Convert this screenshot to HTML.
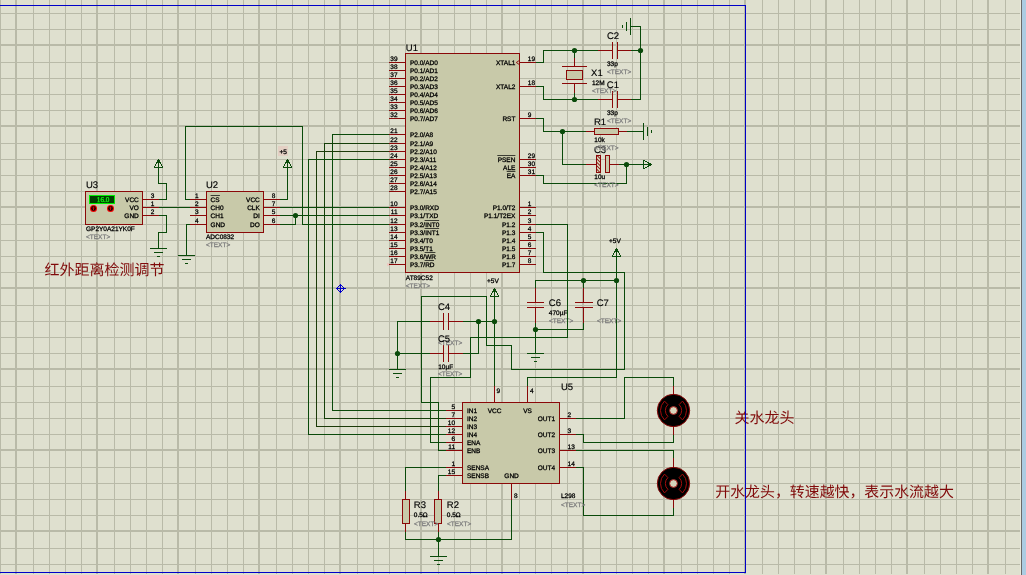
<!DOCTYPE html>
<html lang="zh"><head><meta charset="utf-8"><title>Schematic</title>
<style>
html,body{margin:0;padding:0;background:#dfe0cf;overflow:hidden}
svg{display:block;position:absolute;left:0;top:0;will-change:transform}
text{white-space:pre}
</style></head><body>
<svg width="1026" height="575" viewBox="0 0 1026 575" shape-rendering="crispEdges" text-rendering="geometricPrecision">
<rect x="0" y="0" width="1026" height="575" fill="#dfe0cf"/>
<path fill="#b9baa8" d="M0 0h1v574h-1zM15 0h2v574h-2zM33 0h1v574h-1zM49 0h1v574h-1zM65 0h1v574h-1zM81 0h1v574h-1zM96 0h2v574h-2zM114 0h1v574h-1zM130 0h1v574h-1zM146 0h1v574h-1zM162 0h1v574h-1zM177 0h2v574h-2zM195 0h1v574h-1zM211 0h1v574h-1zM227 0h1v574h-1zM243 0h1v574h-1zM258 0h2v574h-2zM276 0h1v574h-1zM292 0h1v574h-1zM308 0h1v574h-1zM324 0h1v574h-1zM339 0h2v574h-2zM357 0h1v574h-1zM373 0h1v574h-1zM389 0h1v574h-1zM405 0h1v574h-1zM420 0h2v574h-2zM438 0h1v574h-1zM454 0h1v574h-1zM470 0h1v574h-1zM486 0h1v574h-1zM501 0h2v574h-2zM519 0h1v574h-1zM535 0h1v574h-1zM551 0h1v574h-1zM567 0h1v574h-1zM582 0h2v574h-2zM600 0h1v574h-1zM616 0h1v574h-1zM632 0h1v574h-1zM648 0h1v574h-1zM663 0h2v574h-2zM681 0h1v574h-1zM697 0h1v574h-1zM713 0h1v574h-1zM729 0h1v574h-1zM744 0h2v574h-2zM762 0h1v574h-1zM778 0h1v574h-1zM794 0h1v574h-1zM810 0h1v574h-1zM825 0h2v574h-2zM843 0h1v574h-1zM859 0h1v574h-1zM875 0h1v574h-1zM891 0h1v574h-1zM906 0h2v574h-2zM924 0h1v574h-1zM940 0h1v574h-1zM956 0h1v574h-1zM972 0h1v574h-1zM987 0h2v574h-2zM1005 0h1v574h-1zM0 13h1020v1h-1020zM0 29h1020v1h-1020zM0 44h1020v2h-1020zM0 62h1020v1h-1020zM0 78h1020v1h-1020zM0 94h1020v1h-1020zM0 110h1020v1h-1020zM0 125h1020v2h-1020zM0 143h1020v1h-1020zM0 159h1020v1h-1020zM0 175h1020v1h-1020zM0 191h1020v1h-1020zM0 206h1020v2h-1020zM0 224h1020v1h-1020zM0 240h1020v1h-1020zM0 256h1020v1h-1020zM0 272h1020v1h-1020zM0 287h1020v2h-1020zM0 305h1020v1h-1020zM0 321h1020v1h-1020zM0 337h1020v1h-1020zM0 353h1020v1h-1020zM0 368h1020v2h-1020zM0 386h1020v1h-1020zM0 402h1020v1h-1020zM0 418h1020v1h-1020zM0 434h1020v1h-1020zM0 449h1020v2h-1020zM0 467h1020v1h-1020zM0 483h1020v1h-1020zM0 499h1020v1h-1020zM0 515h1020v1h-1020zM0 530h1020v2h-1020zM0 548h1020v1h-1020zM0 564h1020v1h-1020z"/>
<rect x="1020" y="0" width="1" height="575" fill="#e9e9dc"/>
<rect x="1021" y="0" width="1" height="575" fill="#6a6a6a"/>
<rect x="1022" y="0" width="4" height="575" fill="#abcce2"/>
<rect x="85.5" y="191.5" width="57" height="33" fill="#c8c9a9" stroke="#8a0808" stroke-width="1"/>
<rect x="89.5" y="195.5" width="25" height="8" fill="#004000" stroke="#00f000" stroke-width="1"/>
<text x="109.4" y="202.4" font-size="7.2" fill="#10e810" stroke="#10e810" stroke-width="0.4" text-anchor="end">16.0</text>
<g shape-rendering="geometricPrecision"><circle cx="93.5" cy="208.5" r="3.5" fill="#f00000"/><circle cx="93.5" cy="208.5" r="2.4" fill="#100000"/><rect x="93.1" y="206.6" width="0.9" height="3.6" fill="#f00000"/><rect x="92.2" y="207.6" width="2.6" height="0.8" fill="#c00000"/></g>
<g shape-rendering="geometricPrecision"><circle cx="110.5" cy="208.5" r="3.5" fill="#f00000"/><circle cx="110.5" cy="208.5" r="2.4" fill="#100000"/><rect x="110.1" y="206.6" width="0.9" height="3.6" fill="#f00000"/><rect x="109.2" y="207.6" width="2.6" height="0.8" fill="#c00000"/></g>
<rect x="206.5" y="191.5" width="57" height="41" fill="#c8c9a9" stroke="#8a0808" stroke-width="1"/>
<rect x="405.5" y="53.5" width="114" height="219" fill="#c8c9a9" stroke="#8a0808" stroke-width="1"/>
<rect x="462.5" y="402.5" width="97" height="81" fill="#c8c9a9" stroke="#8a0808" stroke-width="1"/>
<rect x="143" y="199" width="16" height="1" fill="#8a0808"/>
<rect x="143" y="207" width="16" height="1" fill="#8a0808"/>
<rect x="143" y="215" width="16" height="1" fill="#8a0808"/>
<rect x="190" y="199" width="16" height="1" fill="#8a0808"/>
<rect x="264" y="199" width="16" height="1" fill="#8a0808"/>
<rect x="190" y="207" width="16" height="1" fill="#8a0808"/>
<rect x="264" y="207" width="16" height="1" fill="#8a0808"/>
<rect x="190" y="215" width="16" height="1" fill="#8a0808"/>
<rect x="264" y="215" width="16" height="1" fill="#8a0808"/>
<rect x="190" y="224" width="16" height="1" fill="#8a0808"/>
<rect x="264" y="224" width="16" height="1" fill="#8a0808"/>
<rect x="389" y="62" width="16" height="1" fill="#8a0808"/>
<rect x="389" y="70" width="16" height="1" fill="#8a0808"/>
<rect x="389" y="78" width="16" height="1" fill="#8a0808"/>
<rect x="389" y="86" width="16" height="1" fill="#8a0808"/>
<rect x="389" y="94" width="16" height="1" fill="#8a0808"/>
<rect x="389" y="102" width="16" height="1" fill="#8a0808"/>
<rect x="389" y="110" width="16" height="1" fill="#8a0808"/>
<rect x="389" y="118" width="16" height="1" fill="#8a0808"/>
<rect x="389" y="134" width="16" height="1" fill="#8a0808"/>
<rect x="389" y="143" width="16" height="1" fill="#8a0808"/>
<rect x="389" y="151" width="16" height="1" fill="#8a0808"/>
<rect x="389" y="159" width="16" height="1" fill="#8a0808"/>
<rect x="389" y="167" width="16" height="1" fill="#8a0808"/>
<rect x="389" y="175" width="16" height="1" fill="#8a0808"/>
<rect x="389" y="183" width="16" height="1" fill="#8a0808"/>
<rect x="389" y="191" width="16" height="1" fill="#8a0808"/>
<rect x="389" y="207" width="16" height="1" fill="#8a0808"/>
<rect x="389" y="215" width="16" height="1" fill="#8a0808"/>
<rect x="389" y="224" width="16" height="1" fill="#8a0808"/>
<rect x="389" y="232" width="16" height="1" fill="#8a0808"/>
<rect x="389" y="240" width="16" height="1" fill="#8a0808"/>
<rect x="389" y="248" width="16" height="1" fill="#8a0808"/>
<rect x="389" y="256" width="16" height="1" fill="#8a0808"/>
<rect x="389" y="264" width="16" height="1" fill="#8a0808"/>
<rect x="520" y="62" width="16" height="1" fill="#8a0808"/>
<rect x="520" y="86" width="16" height="1" fill="#8a0808"/>
<rect x="520" y="118" width="16" height="1" fill="#8a0808"/>
<rect x="520" y="159" width="16" height="1" fill="#8a0808"/>
<rect x="520" y="167" width="16" height="1" fill="#8a0808"/>
<rect x="520" y="175" width="16" height="1" fill="#8a0808"/>
<rect x="520" y="207" width="16" height="1" fill="#8a0808"/>
<rect x="520" y="215" width="16" height="1" fill="#8a0808"/>
<rect x="520" y="224" width="16" height="1" fill="#8a0808"/>
<rect x="520" y="232" width="16" height="1" fill="#8a0808"/>
<rect x="520" y="240" width="16" height="1" fill="#8a0808"/>
<rect x="520" y="248" width="16" height="1" fill="#8a0808"/>
<rect x="520" y="256" width="16" height="1" fill="#8a0808"/>
<rect x="520" y="264" width="16" height="1" fill="#8a0808"/>
<rect x="387" y="263" width="2" height="3" fill="#ecc8c0"/>
<path d="M519.5 60.3 L516.3 62.5 L519.5 64.7" fill="none" stroke="#8a0808" stroke-width="0.9" shape-rendering="geometricPrecision"/>
<rect x="446" y="410" width="16" height="1" fill="#8a0808"/>
<rect x="446" y="418" width="16" height="1" fill="#8a0808"/>
<rect x="446" y="426" width="16" height="1" fill="#8a0808"/>
<rect x="446" y="434" width="16" height="1" fill="#8a0808"/>
<rect x="446" y="442" width="16" height="1" fill="#8a0808"/>
<rect x="446" y="450" width="16" height="1" fill="#8a0808"/>
<rect x="446" y="467" width="16" height="1" fill="#8a0808"/>
<rect x="446" y="475" width="16" height="1" fill="#8a0808"/>
<rect x="560" y="418" width="16" height="1" fill="#8a0808"/>
<rect x="560" y="434" width="16" height="1" fill="#8a0808"/>
<rect x="560" y="450" width="16" height="1" fill="#8a0808"/>
<rect x="560" y="467" width="16" height="1" fill="#8a0808"/>
<rect x="494" y="386" width="1" height="16" fill="#8a0808"/>
<rect x="527" y="386" width="1" height="16" fill="#8a0808"/>
<rect x="511" y="484" width="1" height="16" fill="#8a0808"/>
<rect x="598" y="50" width="15" height="1" fill="#8a0808"/>
<rect x="617" y="50" width="15" height="1" fill="#8a0808"/>
<rect x="612" y="42" width="1" height="17" fill="#8a0808"/>
<rect x="617" y="42" width="1" height="17" fill="#8a0808"/>
<rect x="598" y="99" width="15" height="1" fill="#8a0808"/>
<rect x="617" y="99" width="15" height="1" fill="#8a0808"/>
<rect x="612" y="91" width="1" height="17" fill="#8a0808"/>
<rect x="617" y="91" width="1" height="17" fill="#8a0808"/>
<rect x="429" y="321" width="15" height="1" fill="#8a0808"/>
<rect x="448" y="321" width="15" height="1" fill="#8a0808"/>
<rect x="443" y="313" width="1" height="17" fill="#8a0808"/>
<rect x="448" y="313" width="1" height="17" fill="#8a0808"/>
<rect x="429" y="353" width="15" height="1" fill="#8a0808"/>
<rect x="448" y="353" width="15" height="1" fill="#8a0808"/>
<rect x="443" y="345" width="1" height="17" fill="#8a0808"/>
<rect x="448" y="345" width="1" height="17" fill="#8a0808"/>
<rect x="535" y="288" width="1" height="15" fill="#8a0808"/>
<rect x="535" y="307" width="1" height="16" fill="#8a0808"/>
<rect x="527" y="302" width="17" height="1" fill="#8a0808"/>
<rect x="527" y="307" width="17" height="1" fill="#8a0808"/>
<rect x="583" y="288" width="1" height="15" fill="#8a0808"/>
<rect x="583" y="307" width="1" height="16" fill="#8a0808"/>
<rect x="575" y="302" width="18" height="1" fill="#8a0808"/>
<rect x="575" y="307" width="18" height="1" fill="#8a0808"/>
<rect x="574" y="58" width="1" height="9" fill="#8a0808"/>
<rect x="562" y="66" width="25" height="1" fill="#8a0808"/>
<rect x="566.5" y="70.5" width="16" height="9" fill="#c8c9a9" stroke="#8a0808" stroke-width="1"/>
<rect x="562" y="83" width="25" height="1" fill="#8a0808"/>
<rect x="574" y="83" width="1" height="10" fill="#8a0808"/>
<rect x="586" y="131" width="9" height="1" fill="#8a0808"/>
<rect x="619" y="131" width="8" height="1" fill="#8a0808"/>
<rect x="594.5" y="128.5" width="24" height="6" fill="#c8c9a9" stroke="#8a0808" stroke-width="1"/>
<rect x="586" y="164" width="11" height="1" fill="#8a0808"/>
<rect x="610" y="164" width="9" height="1" fill="#8a0808"/>
<rect x="596.5" y="155.5" width="4" height="17" fill="#d8dcc0" stroke="#8a0808" stroke-width="1"/>
<path d="M596.5 155 L600.5 159 M596.5 158.5 L600.5 162.5 M596.5 162 L600.5 166 M596.5 165.5 L600.5 169.5 M596.5 169 L600.5 173" stroke="#8a0808" stroke-width="1.05" fill="none" shape-rendering="geometricPrecision"/>
<rect x="605.5" y="155.5" width="4" height="17" fill="#c8c9a9" stroke="#8a0808" stroke-width="1"/>
<rect x="405" y="491" width="1" height="9" fill="#8a0808"/>
<rect x="405" y="523" width="1" height="9" fill="#8a0808"/>
<rect x="402.5" y="499.5" width="7" height="24" fill="#c8c9a9" stroke="#8a0808" stroke-width="1"/>
<rect x="438" y="491" width="1" height="9" fill="#8a0808"/>
<rect x="438" y="523" width="1" height="9" fill="#8a0808"/>
<rect x="434.5" y="499.5" width="7" height="24" fill="#c8c9a9" stroke="#8a0808" stroke-width="1"/>
<rect x="673" y="385" width="1" height="10" fill="#8a0808"/>
<rect x="673" y="426" width="1" height="9" fill="#8a0808"/>
<g shape-rendering="geometricPrecision" transform="translate(673.5 410.5)"><circle r="16.2" fill="#000" stroke="#8a0808" stroke-width="1"/><path d="M-9 -9.4 A13 13 0 0 0 -9 9.4 L-5.6 5.9 A8.1 8.1 0 0 1 -5.6 -5.9 Z M9 -9.4 A13 13 0 0 1 9 9.4 L5.6 5.9 A8.1 8.1 0 0 0 5.6 -5.9 Z" fill="none" stroke="#a40c0c" stroke-width="1"/><circle r="3.9" fill="#d4d6bc" stroke="#a81010" stroke-width="0.9"/></g>
<rect x="673" y="458" width="1" height="10" fill="#8a0808"/>
<rect x="673" y="499" width="1" height="9" fill="#8a0808"/>
<g shape-rendering="geometricPrecision" transform="translate(673.5 483.5)"><circle r="16.2" fill="#000" stroke="#8a0808" stroke-width="1"/><path d="M-9 -9.4 A13 13 0 0 0 -9 9.4 L-5.6 5.9 A8.1 8.1 0 0 1 -5.6 -5.9 Z M9 -9.4 A13 13 0 0 1 9 9.4 L5.6 5.9 A8.1 8.1 0 0 0 5.6 -5.9 Z" fill="none" stroke="#a40c0c" stroke-width="1"/><circle r="3.9" fill="#d4d6bc" stroke="#a81010" stroke-width="0.9"/></g>
<rect x="158" y="160" width="1" height="24" fill="#0a4a0a"/>
<rect x="158" y="183" width="9" height="1" fill="#0a4a0a"/>
<rect x="166" y="183" width="1" height="17" fill="#0a4a0a"/>
<rect x="159" y="199" width="8" height="1" fill="#0a4a0a"/>
<path fill="#0a4a0a" d="M154 166h1v1h-1zM154 167h1v1h-1zM155 164h1v1h-1zM155 165h1v1h-1zM155 167h1v1h-1zM156 162h1v1h-1zM156 163h1v1h-1zM156 167h1v1h-1zM157 160h1v1h-1zM157 161h1v1h-1zM157 162h1v1h-1zM157 167h1v1h-1zM158 159h1v1h-1zM158 167h1v1h-1zM159 160h1v1h-1zM159 161h1v1h-1zM159 162h1v1h-1zM159 167h1v1h-1zM160 162h1v1h-1zM160 163h1v1h-1zM160 167h1v1h-1zM161 164h1v1h-1zM161 165h1v1h-1zM161 167h1v1h-1zM162 166h1v1h-1zM162 167h1v1h-1z"/>
<rect x="159" y="207" width="31" height="1" fill="#0a4a0a"/>
<rect x="159" y="215" width="8" height="1" fill="#0a4a0a"/>
<rect x="166" y="215" width="1" height="18" fill="#0a4a0a"/>
<rect x="158" y="232" width="9" height="1" fill="#0a4a0a"/>
<rect x="158" y="232" width="1" height="17" fill="#0a4a0a"/>
<rect x="150" y="248" width="17" height="1" fill="#0a4a0a"/>
<rect x="154" y="252" width="9" height="1" fill="#0a4a0a"/>
<rect x="157" y="256" width="3" height="1" fill="#0a4a0a"/>
<rect x="185" y="199" width="5" height="1" fill="#0a4a0a"/>
<rect x="185" y="126" width="1" height="74" fill="#0a4a0a"/>
<rect x="185" y="126" width="118" height="1" fill="#0a4a0a"/>
<rect x="302" y="126" width="1" height="99" fill="#0a4a0a"/>
<rect x="302" y="224" width="87" height="1" fill="#0a4a0a"/>
<rect x="186" y="224" width="4" height="1" fill="#0a4a0a"/>
<rect x="186" y="224" width="1" height="32" fill="#0a4a0a"/>
<rect x="178" y="255" width="17" height="1" fill="#0a4a0a"/>
<rect x="182" y="259" width="9" height="1" fill="#0a4a0a"/>
<rect x="185" y="263" width="3" height="1" fill="#0a4a0a"/>
<rect x="280" y="199" width="8" height="1" fill="#0a4a0a"/>
<rect x="287" y="160" width="1" height="40" fill="#0a4a0a"/>
<path fill="#0a4a0a" d="M283 166h1v1h-1zM283 167h1v1h-1zM284 164h1v1h-1zM284 165h1v1h-1zM284 167h1v1h-1zM285 162h1v1h-1zM285 163h1v1h-1zM285 167h1v1h-1zM286 160h1v1h-1zM286 161h1v1h-1zM286 162h1v1h-1zM286 167h1v1h-1zM287 159h1v1h-1zM287 167h1v1h-1zM288 160h1v1h-1zM288 161h1v1h-1zM288 162h1v1h-1zM288 167h1v1h-1zM289 162h1v1h-1zM289 163h1v1h-1zM289 167h1v1h-1zM290 164h1v1h-1zM290 165h1v1h-1zM290 167h1v1h-1zM291 166h1v1h-1zM291 167h1v1h-1z"/>
<rect x="280" y="207" width="109" height="1" fill="#0a4a0a"/>
<rect x="280" y="215" width="109" height="1" fill="#0a4a0a"/>
<rect x="280" y="224" width="16" height="1" fill="#0a4a0a"/>
<rect x="295" y="215" width="1" height="10" fill="#0a4a0a"/>
<circle cx="295.5" cy="215.5" r="2.6" fill="#0a4a0a" shape-rendering="geometricPrecision"/>
<rect x="332" y="134" width="57" height="1" fill="#0a4a0a"/>
<rect x="332" y="134" width="1" height="277" fill="#0a4a0a"/>
<rect x="332" y="410" width="114" height="1" fill="#0a4a0a"/>
<rect x="324" y="143" width="65" height="1" fill="#143e08"/>
<rect x="324" y="143" width="1" height="276" fill="#143e08"/>
<rect x="324" y="418" width="122" height="1" fill="#143e08"/>
<rect x="316" y="151" width="73" height="1" fill="#1c3a08"/>
<rect x="316" y="151" width="1" height="276" fill="#1c3a08"/>
<rect x="316" y="426" width="130" height="1" fill="#1c3a08"/>
<rect x="308" y="159" width="81" height="1" fill="#0a4a0a"/>
<rect x="308" y="159" width="1" height="276" fill="#0a4a0a"/>
<rect x="308" y="434" width="138" height="1" fill="#0a4a0a"/>
<rect x="536" y="62" width="8" height="1" fill="#0a4a0a"/>
<rect x="543" y="50" width="1" height="13" fill="#0a4a0a"/>
<rect x="543" y="50" width="55" height="1" fill="#0a4a0a"/>
<rect x="574" y="50" width="1" height="8" fill="#0a4a0a"/>
<rect x="631" y="50" width="10" height="1" fill="#0a4a0a"/>
<rect x="631" y="26" width="10" height="1" fill="#0a4a0a"/>
<rect x="640" y="26" width="1" height="74" fill="#0a4a0a"/>
<rect x="631" y="99" width="10" height="1" fill="#0a4a0a"/>
<rect x="630" y="18" width="1" height="17" fill="#0a4a0a"/>
<rect x="626" y="22" width="1" height="9" fill="#0a4a0a"/>
<rect x="622" y="25" width="1" height="3" fill="#0a4a0a"/>
<rect x="536" y="86" width="8" height="1" fill="#0a4a0a"/>
<rect x="543" y="86" width="1" height="14" fill="#0a4a0a"/>
<rect x="543" y="99" width="55" height="1" fill="#0a4a0a"/>
<rect x="574" y="93" width="1" height="7" fill="#0a4a0a"/>
<circle cx="574.5" cy="50.5" r="2.6" fill="#0a4a0a" shape-rendering="geometricPrecision"/>
<circle cx="640.5" cy="50.5" r="2.6" fill="#0a4a0a" shape-rendering="geometricPrecision"/>
<circle cx="574.5" cy="99.5" r="2.6" fill="#0a4a0a" shape-rendering="geometricPrecision"/>
<rect x="536" y="118" width="8" height="1" fill="#0a4a0a"/>
<rect x="543" y="118" width="1" height="14" fill="#0a4a0a"/>
<rect x="543" y="131" width="43" height="1" fill="#0a4a0a"/>
<rect x="627" y="131" width="17" height="1" fill="#0a4a0a"/>
<rect x="643" y="123" width="1" height="17" fill="#0a4a0a"/>
<rect x="647" y="127" width="1" height="9" fill="#0a4a0a"/>
<rect x="651" y="130" width="1" height="3" fill="#0a4a0a"/>
<rect x="562" y="131" width="1" height="34" fill="#0a4a0a"/>
<rect x="562" y="164" width="24" height="1" fill="#0a4a0a"/>
<rect x="619" y="164" width="32" height="1" fill="#0a4a0a"/>
<circle cx="562.5" cy="131.5" r="2.6" fill="#0a4a0a" shape-rendering="geometricPrecision"/>
<circle cx="626.5" cy="164.5" r="2.6" fill="#0a4a0a" shape-rendering="geometricPrecision"/>
<path fill="#0a4a0a" d="M643 160h1v1h-1zM643 161h1v1h-1zM643 162h1v1h-1zM643 163h1v1h-1zM643 164h1v1h-1zM643 165h1v1h-1zM643 166h1v1h-1zM643 167h1v1h-1zM643 168h1v1h-1zM644 160h1v1h-1zM644 164h1v1h-1zM644 168h1v1h-1zM645 161h1v1h-1zM645 164h1v1h-1zM645 167h1v1h-1zM646 161h1v1h-1zM646 164h1v1h-1zM646 167h1v1h-1zM647 162h1v1h-1zM647 164h1v1h-1zM647 166h1v1h-1zM648 162h1v1h-1zM648 163h1v1h-1zM648 164h1v1h-1zM648 165h1v1h-1zM648 166h1v1h-1zM649 163h1v1h-1zM649 164h1v1h-1zM649 165h1v1h-1zM650 163h1v1h-1zM650 164h1v1h-1zM650 165h1v1h-1zM651 164h1v1h-1z"/>
<rect x="536" y="175" width="8" height="1" fill="#0a4a0a"/>
<rect x="543" y="175" width="1" height="9" fill="#0a4a0a"/>
<rect x="543" y="183" width="84" height="1" fill="#0a4a0a"/>
<rect x="626" y="164" width="1" height="20" fill="#0a4a0a"/>
<rect x="536" y="224" width="32" height="1" fill="#0a4a0a"/>
<rect x="567" y="224" width="1" height="114" fill="#0a4a0a"/>
<rect x="470" y="337" width="98" height="1" fill="#0a4a0a"/>
<rect x="470" y="337" width="1" height="41" fill="#0a4a0a"/>
<rect x="430" y="377" width="41" height="1" fill="#0a4a0a"/>
<rect x="430" y="377" width="1" height="66" fill="#0a4a0a"/>
<rect x="430" y="442" width="16" height="1" fill="#0a4a0a"/>
<rect x="536" y="232" width="8" height="1" fill="#0a4a0a"/>
<rect x="543" y="232" width="1" height="41" fill="#0a4a0a"/>
<rect x="543" y="272" width="82" height="1" fill="#0a4a0a"/>
<rect x="624" y="272" width="1" height="98" fill="#0a4a0a"/>
<rect x="511" y="369" width="114" height="1" fill="#0a4a0a"/>
<rect x="511" y="345" width="1" height="25" fill="#0a4a0a"/>
<rect x="486" y="345" width="26" height="1" fill="#0a4a0a"/>
<rect x="486" y="296" width="1" height="50" fill="#0a4a0a"/>
<rect x="421" y="296" width="66" height="1" fill="#0a4a0a"/>
<rect x="421" y="296" width="1" height="107" fill="#0a4a0a"/>
<rect x="421" y="402" width="18" height="1" fill="#0a4a0a"/>
<rect x="438" y="402" width="1" height="49" fill="#0a4a0a"/>
<rect x="438" y="450" width="8" height="1" fill="#0a4a0a"/>
<path fill="#0a4a0a" d="M612 255h1v1h-1zM612 256h1v1h-1zM613 253h1v1h-1zM613 254h1v1h-1zM613 256h1v1h-1zM614 251h1v1h-1zM614 252h1v1h-1zM614 256h1v1h-1zM615 249h1v1h-1zM615 250h1v1h-1zM615 251h1v1h-1zM615 256h1v1h-1zM616 248h1v1h-1zM616 256h1v1h-1zM617 249h1v1h-1zM617 250h1v1h-1zM617 251h1v1h-1zM617 256h1v1h-1zM618 251h1v1h-1zM618 252h1v1h-1zM618 256h1v1h-1zM619 253h1v1h-1zM619 254h1v1h-1zM619 256h1v1h-1zM620 255h1v1h-1zM620 256h1v1h-1z"/>
<rect x="616" y="249" width="1" height="129" fill="#0a4a0a"/>
<rect x="527" y="377" width="90" height="1" fill="#0a4a0a"/>
<rect x="527" y="377" width="1" height="9" fill="#0a4a0a"/>
<rect x="535" y="280" width="82" height="1" fill="#0a4a0a"/>
<rect x="535" y="280" width="1" height="8" fill="#0a4a0a"/>
<rect x="583" y="280" width="1" height="8" fill="#0a4a0a"/>
<circle cx="583.5" cy="280.5" r="2.6" fill="#0a4a0a" shape-rendering="geometricPrecision"/>
<circle cx="616.5" cy="280.5" r="2.6" fill="#0a4a0a" shape-rendering="geometricPrecision"/>
<rect x="535" y="323" width="1" height="31" fill="#0a4a0a"/>
<rect x="535" y="329" width="49" height="1" fill="#0a4a0a"/>
<rect x="583" y="323" width="1" height="7" fill="#0a4a0a"/>
<circle cx="535.5" cy="329.5" r="2.6" fill="#0a4a0a" shape-rendering="geometricPrecision"/>
<rect x="527" y="353" width="17" height="1" fill="#0a4a0a"/>
<rect x="531" y="357" width="9" height="1" fill="#0a4a0a"/>
<rect x="534" y="361" width="3" height="1" fill="#0a4a0a"/>
<path fill="#0a4a0a" d="M490 295h1v1h-1zM490 296h1v1h-1zM491 293h1v1h-1zM491 294h1v1h-1zM491 296h1v1h-1zM492 291h1v1h-1zM492 292h1v1h-1zM492 296h1v1h-1zM493 289h1v1h-1zM493 290h1v1h-1zM493 291h1v1h-1zM493 296h1v1h-1zM494 288h1v1h-1zM494 296h1v1h-1zM495 289h1v1h-1zM495 290h1v1h-1zM495 291h1v1h-1zM495 296h1v1h-1zM496 291h1v1h-1zM496 292h1v1h-1zM496 296h1v1h-1zM497 293h1v1h-1zM497 294h1v1h-1zM497 296h1v1h-1zM498 295h1v1h-1zM498 296h1v1h-1z"/>
<rect x="494" y="289" width="1" height="97" fill="#0a4a0a"/>
<rect x="463" y="321" width="32" height="1" fill="#0a4a0a"/>
<rect x="478" y="321" width="1" height="33" fill="#0a4a0a"/>
<rect x="463" y="353" width="16" height="1" fill="#0a4a0a"/>
<circle cx="478.5" cy="321.5" r="2.6" fill="#0a4a0a" shape-rendering="geometricPrecision"/>
<circle cx="494.5" cy="321.5" r="2.6" fill="#0a4a0a" shape-rendering="geometricPrecision"/>
<rect x="397" y="321" width="33" height="1" fill="#0a4a0a"/>
<rect x="397" y="321" width="1" height="49" fill="#0a4a0a"/>
<rect x="397" y="353" width="33" height="1" fill="#0a4a0a"/>
<circle cx="397.5" cy="353.5" r="2.6" fill="#0a4a0a" shape-rendering="geometricPrecision"/>
<rect x="389" y="369" width="17" height="1" fill="#0a4a0a"/>
<rect x="393" y="373" width="9" height="1" fill="#0a4a0a"/>
<rect x="396" y="377" width="3" height="1" fill="#0a4a0a"/>
<rect x="405" y="467" width="41" height="1" fill="#0a4a0a"/>
<rect x="405" y="467" width="1" height="24" fill="#0a4a0a"/>
<rect x="438" y="475" width="8" height="1" fill="#0a4a0a"/>
<rect x="438" y="475" width="1" height="16" fill="#0a4a0a"/>
<rect x="405" y="532" width="1" height="8" fill="#0a4a0a"/>
<rect x="405" y="539" width="107" height="1" fill="#0a4a0a"/>
<rect x="511" y="500" width="1" height="40" fill="#0a4a0a"/>
<rect x="438" y="532" width="1" height="25" fill="#0a4a0a"/>
<circle cx="438.5" cy="539.5" r="2.6" fill="#0a4a0a" shape-rendering="geometricPrecision"/>
<rect x="430" y="556" width="17" height="1" fill="#0a4a0a"/>
<rect x="434" y="560" width="9" height="1" fill="#0a4a0a"/>
<rect x="437" y="564" width="3" height="1" fill="#0a4a0a"/>
<rect x="576" y="418" width="49" height="1" fill="#0a4a0a"/>
<rect x="624" y="377" width="1" height="42" fill="#0a4a0a"/>
<rect x="624" y="377" width="50" height="1" fill="#0a4a0a"/>
<rect x="673" y="377" width="1" height="9" fill="#0a4a0a"/>
<rect x="576" y="434" width="8" height="1" fill="#0a4a0a"/>
<rect x="583" y="434" width="1" height="9" fill="#0a4a0a"/>
<rect x="583" y="442" width="91" height="1" fill="#0a4a0a"/>
<rect x="673" y="435" width="1" height="8" fill="#0a4a0a"/>
<rect x="576" y="450" width="98" height="1" fill="#0a4a0a"/>
<rect x="673" y="450" width="1" height="8" fill="#0a4a0a"/>
<rect x="576" y="467" width="8" height="1" fill="#0a4a0a"/>
<rect x="583" y="467" width="1" height="49" fill="#0a4a0a"/>
<rect x="583" y="515" width="91" height="1" fill="#0a4a0a"/>
<rect x="673" y="508" width="1" height="8" fill="#0a4a0a"/>
<g font-family="'Liberation Sans', sans-serif" shape-rendering="geometricPrecision">
<text x="86" y="187.8" font-size="9.5" fill="#000000" stroke="#000000" stroke-width="0.15">U3</text>
<text x="86" y="231.2" font-size="6.5" fill="#000000" stroke="#000000" stroke-width="0.28">GP2Y0A21YK0F</text>
<text x="86" y="239.3" font-size="6.5" fill="#7e7e7e" stroke="#7e7e7e" stroke-width="0.28">&lt;TEXT&gt;</text>
<text x="138.8" y="201.9" font-size="6.5" fill="#000000" stroke="#000000" stroke-width="0.28" text-anchor="end">VCC</text>
<text x="150.8" y="198" font-size="6.5" fill="#000000" stroke="#000000" stroke-width="0.28">3</text>
<text x="138.8" y="209.9" font-size="6.5" fill="#000000" stroke="#000000" stroke-width="0.28" text-anchor="end">VO</text>
<text x="150.8" y="206" font-size="6.5" fill="#000000" stroke="#000000" stroke-width="0.28">1</text>
<text x="138.8" y="217.9" font-size="6.5" fill="#000000" stroke="#000000" stroke-width="0.28" text-anchor="end">GND</text>
<text x="150.8" y="214" font-size="6.5" fill="#000000" stroke="#000000" stroke-width="0.28">2</text>
<text x="206" y="187.8" font-size="9.5" fill="#000000" stroke="#000000" stroke-width="0.15">U2</text>
<text x="206" y="238.6" font-size="6.5" fill="#000000" stroke="#000000" stroke-width="0.28">ADC0832</text>
<text x="206" y="246.7" font-size="6.5" fill="#7e7e7e" stroke="#7e7e7e" stroke-width="0.28">&lt;TEXT&gt;</text>
<text x="210.6" y="201.9" font-size="6.5" fill="#000000" stroke="#000000" stroke-width="0.28">CS</text>
<text x="198.6" y="198" font-size="6.5" fill="#000000" stroke="#000000" stroke-width="0.28" text-anchor="end">1</text>
<text x="259.8" y="201.9" font-size="6.5" fill="#000000" stroke="#000000" stroke-width="0.28" text-anchor="end">VCC</text>
<text x="271.8" y="198" font-size="6.5" fill="#000000" stroke="#000000" stroke-width="0.28">8</text>
<text x="210.6" y="209.9" font-size="6.5" fill="#000000" stroke="#000000" stroke-width="0.28">CH0</text>
<text x="198.6" y="206" font-size="6.5" fill="#000000" stroke="#000000" stroke-width="0.28" text-anchor="end">2</text>
<text x="259.8" y="209.9" font-size="6.5" fill="#000000" stroke="#000000" stroke-width="0.28" text-anchor="end">CLK</text>
<text x="271.8" y="206" font-size="6.5" fill="#000000" stroke="#000000" stroke-width="0.28">7</text>
<text x="210.6" y="217.9" font-size="6.5" fill="#000000" stroke="#000000" stroke-width="0.28">CH1</text>
<text x="198.6" y="214" font-size="6.5" fill="#000000" stroke="#000000" stroke-width="0.28" text-anchor="end">3</text>
<text x="259.8" y="217.9" font-size="6.5" fill="#000000" stroke="#000000" stroke-width="0.28" text-anchor="end">DI</text>
<text x="271.8" y="214" font-size="6.5" fill="#000000" stroke="#000000" stroke-width="0.28">5</text>
<text x="210.6" y="226.9" font-size="6.5" fill="#000000" stroke="#000000" stroke-width="0.28">GND</text>
<text x="198.6" y="223" font-size="6.5" fill="#000000" stroke="#000000" stroke-width="0.28" text-anchor="end">4</text>
<text x="259.8" y="226.9" font-size="6.5" fill="#000000" stroke="#000000" stroke-width="0.28" text-anchor="end">DO</text>
<text x="271.8" y="223" font-size="6.5" fill="#000000" stroke="#000000" stroke-width="0.28">6</text>
<rect x="210.6" y="195.1" width="9.300000000000011" height="0.7" fill="#000000" shape-rendering="geometricPrecision"/>
<rect x="278" y="146" width="10" height="10" fill="#e4d0c4"/>
<text x="279.4" y="153.8" font-size="6.5" fill="#000000" stroke="#000000" stroke-width="0.28">+5</text>
<text x="405.8" y="50.8" font-size="9.5" fill="#000000" stroke="#000000" stroke-width="0.15">U1</text>
<text x="405.8" y="279.8" font-size="6.5" fill="#000000" stroke="#000000" stroke-width="0.28">AT89C52</text>
<text x="405.8" y="287.9" font-size="6.5" fill="#7e7e7e" stroke="#7e7e7e" stroke-width="0.28">&lt;TEXT&gt;</text>
<text x="410" y="64.9" font-size="6.5" fill="#000000" stroke="#000000" stroke-width="0.28">P0.0/AD0</text>
<text x="397.5" y="61" font-size="6.5" fill="#000000" stroke="#000000" stroke-width="0.28" text-anchor="end">39</text>
<text x="410" y="72.9" font-size="6.5" fill="#000000" stroke="#000000" stroke-width="0.28">P0.1/AD1</text>
<text x="397.5" y="69" font-size="6.5" fill="#000000" stroke="#000000" stroke-width="0.28" text-anchor="end">38</text>
<text x="410" y="80.9" font-size="6.5" fill="#000000" stroke="#000000" stroke-width="0.28">P0.2/AD2</text>
<text x="397.5" y="77" font-size="6.5" fill="#000000" stroke="#000000" stroke-width="0.28" text-anchor="end">37</text>
<text x="410" y="88.9" font-size="6.5" fill="#000000" stroke="#000000" stroke-width="0.28">P0.3/AD3</text>
<text x="397.5" y="85" font-size="6.5" fill="#000000" stroke="#000000" stroke-width="0.28" text-anchor="end">36</text>
<text x="410" y="96.9" font-size="6.5" fill="#000000" stroke="#000000" stroke-width="0.28">P0.4/AD4</text>
<text x="397.5" y="93" font-size="6.5" fill="#000000" stroke="#000000" stroke-width="0.28" text-anchor="end">35</text>
<text x="410" y="104.9" font-size="6.5" fill="#000000" stroke="#000000" stroke-width="0.28">P0.5/AD5</text>
<text x="397.5" y="101" font-size="6.5" fill="#000000" stroke="#000000" stroke-width="0.28" text-anchor="end">34</text>
<text x="410" y="112.9" font-size="6.5" fill="#000000" stroke="#000000" stroke-width="0.28">P0.6/AD6</text>
<text x="397.5" y="109" font-size="6.5" fill="#000000" stroke="#000000" stroke-width="0.28" text-anchor="end">33</text>
<text x="410" y="120.9" font-size="6.5" fill="#000000" stroke="#000000" stroke-width="0.28">P0.7/AD7</text>
<text x="397.5" y="117" font-size="6.5" fill="#000000" stroke="#000000" stroke-width="0.28" text-anchor="end">32</text>
<text x="410" y="136.9" font-size="6.5" fill="#000000" stroke="#000000" stroke-width="0.28">P2.0/A8</text>
<text x="397.5" y="133" font-size="6.5" fill="#000000" stroke="#000000" stroke-width="0.28" text-anchor="end">21</text>
<text x="410" y="145.9" font-size="6.5" fill="#000000" stroke="#000000" stroke-width="0.28">P2.1/A9</text>
<text x="397.5" y="142" font-size="6.5" fill="#000000" stroke="#000000" stroke-width="0.28" text-anchor="end">22</text>
<text x="410" y="153.9" font-size="6.5" fill="#000000" stroke="#000000" stroke-width="0.28">P2.2/A10</text>
<text x="397.5" y="150" font-size="6.5" fill="#000000" stroke="#000000" stroke-width="0.28" text-anchor="end">23</text>
<text x="410" y="161.9" font-size="6.5" fill="#000000" stroke="#000000" stroke-width="0.28">P2.3/A11</text>
<text x="397.5" y="158" font-size="6.5" fill="#000000" stroke="#000000" stroke-width="0.28" text-anchor="end">24</text>
<text x="410" y="169.9" font-size="6.5" fill="#000000" stroke="#000000" stroke-width="0.28">P2.4/A12</text>
<text x="397.5" y="166" font-size="6.5" fill="#000000" stroke="#000000" stroke-width="0.28" text-anchor="end">25</text>
<text x="410" y="177.9" font-size="6.5" fill="#000000" stroke="#000000" stroke-width="0.28">P2.5/A13</text>
<text x="397.5" y="174" font-size="6.5" fill="#000000" stroke="#000000" stroke-width="0.28" text-anchor="end">26</text>
<text x="410" y="185.9" font-size="6.5" fill="#000000" stroke="#000000" stroke-width="0.28">P2.6/A14</text>
<text x="397.5" y="182" font-size="6.5" fill="#000000" stroke="#000000" stroke-width="0.28" text-anchor="end">27</text>
<text x="410" y="193.9" font-size="6.5" fill="#000000" stroke="#000000" stroke-width="0.28">P2.7/A15</text>
<text x="397.5" y="190" font-size="6.5" fill="#000000" stroke="#000000" stroke-width="0.28" text-anchor="end">28</text>
<text x="410" y="209.9" font-size="6.5" fill="#000000" stroke="#000000" stroke-width="0.28">P3.0/RXD</text>
<text x="397.5" y="206" font-size="6.5" fill="#000000" stroke="#000000" stroke-width="0.28" text-anchor="end">10</text>
<text x="410" y="217.9" font-size="6.5" fill="#000000" stroke="#000000" stroke-width="0.28">P3.1/TXD</text>
<text x="397.5" y="214" font-size="6.5" fill="#000000" stroke="#000000" stroke-width="0.28" text-anchor="end">11</text>
<text x="410" y="226.9" font-size="6.5" fill="#000000" stroke="#000000" stroke-width="0.28">P3.2/INT0</text>
<text x="397.5" y="223" font-size="6.5" fill="#000000" stroke="#000000" stroke-width="0.28" text-anchor="end">12</text>
<text x="410" y="234.9" font-size="6.5" fill="#000000" stroke="#000000" stroke-width="0.28">P3.3/INT1</text>
<text x="397.5" y="231" font-size="6.5" fill="#000000" stroke="#000000" stroke-width="0.28" text-anchor="end">13</text>
<text x="410" y="242.9" font-size="6.5" fill="#000000" stroke="#000000" stroke-width="0.28">P3.4/T0</text>
<text x="397.5" y="239" font-size="6.5" fill="#000000" stroke="#000000" stroke-width="0.28" text-anchor="end">14</text>
<text x="410" y="250.9" font-size="6.5" fill="#000000" stroke="#000000" stroke-width="0.28">P3.5/T1</text>
<text x="397.5" y="247" font-size="6.5" fill="#000000" stroke="#000000" stroke-width="0.28" text-anchor="end">15</text>
<text x="410" y="258.9" font-size="6.5" fill="#000000" stroke="#000000" stroke-width="0.28">P3.6/WR</text>
<text x="397.5" y="255" font-size="6.5" fill="#000000" stroke="#000000" stroke-width="0.28" text-anchor="end">16</text>
<text x="410" y="266.9" font-size="6.5" fill="#000000" stroke="#000000" stroke-width="0.28">P3.7/RD</text>
<text x="397.5" y="263" font-size="6.5" fill="#000000" stroke="#000000" stroke-width="0.28" text-anchor="end">17</text>
<text x="515.4" y="64.9" font-size="6.5" fill="#000000" stroke="#000000" stroke-width="0.28" text-anchor="end">XTAL1</text>
<text x="527.8" y="61" font-size="6.5" fill="#000000" stroke="#000000" stroke-width="0.28">19</text>
<text x="515.4" y="88.9" font-size="6.5" fill="#000000" stroke="#000000" stroke-width="0.28" text-anchor="end">XTAL2</text>
<text x="527.8" y="85" font-size="6.5" fill="#000000" stroke="#000000" stroke-width="0.28">18</text>
<text x="515.4" y="120.9" font-size="6.5" fill="#000000" stroke="#000000" stroke-width="0.28" text-anchor="end">RST</text>
<text x="527.8" y="117" font-size="6.5" fill="#000000" stroke="#000000" stroke-width="0.28">9</text>
<text x="515.4" y="161.9" font-size="6.5" fill="#000000" stroke="#000000" stroke-width="0.28" text-anchor="end">PSEN</text>
<text x="527.8" y="158" font-size="6.5" fill="#000000" stroke="#000000" stroke-width="0.28">29</text>
<text x="515.4" y="169.9" font-size="6.5" fill="#000000" stroke="#000000" stroke-width="0.28" text-anchor="end">ALE</text>
<text x="527.8" y="166" font-size="6.5" fill="#000000" stroke="#000000" stroke-width="0.28">30</text>
<text x="515.4" y="177.9" font-size="6.5" fill="#000000" stroke="#000000" stroke-width="0.28" text-anchor="end">EA</text>
<text x="527.8" y="174" font-size="6.5" fill="#000000" stroke="#000000" stroke-width="0.28">31</text>
<text x="515.4" y="209.9" font-size="6.5" fill="#000000" stroke="#000000" stroke-width="0.28" text-anchor="end">P1.0/T2</text>
<text x="527.8" y="206" font-size="6.5" fill="#000000" stroke="#000000" stroke-width="0.28">1</text>
<text x="515.4" y="217.9" font-size="6.5" fill="#000000" stroke="#000000" stroke-width="0.28" text-anchor="end">P1.1/T2EX</text>
<text x="527.8" y="214" font-size="6.5" fill="#000000" stroke="#000000" stroke-width="0.28">2</text>
<text x="515.4" y="226.9" font-size="6.5" fill="#000000" stroke="#000000" stroke-width="0.28" text-anchor="end">P1.2</text>
<text x="527.8" y="223" font-size="6.5" fill="#000000" stroke="#000000" stroke-width="0.28">3</text>
<text x="515.4" y="234.9" font-size="6.5" fill="#000000" stroke="#000000" stroke-width="0.28" text-anchor="end">P1.3</text>
<text x="527.8" y="231" font-size="6.5" fill="#000000" stroke="#000000" stroke-width="0.28">4</text>
<text x="515.4" y="242.9" font-size="6.5" fill="#000000" stroke="#000000" stroke-width="0.28" text-anchor="end">P1.4</text>
<text x="527.8" y="239" font-size="6.5" fill="#000000" stroke="#000000" stroke-width="0.28">5</text>
<text x="515.4" y="250.9" font-size="6.5" fill="#000000" stroke="#000000" stroke-width="0.28" text-anchor="end">P1.5</text>
<text x="527.8" y="247" font-size="6.5" fill="#000000" stroke="#000000" stroke-width="0.28">6</text>
<text x="515.4" y="258.9" font-size="6.5" fill="#000000" stroke="#000000" stroke-width="0.28" text-anchor="end">P1.6</text>
<text x="527.8" y="255" font-size="6.5" fill="#000000" stroke="#000000" stroke-width="0.28">7</text>
<text x="515.4" y="266.9" font-size="6.5" fill="#000000" stroke="#000000" stroke-width="0.28" text-anchor="end">P1.7</text>
<text x="527.8" y="263" font-size="6.5" fill="#000000" stroke="#000000" stroke-width="0.28">8</text>
<rect x="424.6" y="220.1" width="14.5" height="0.7" fill="#000000" shape-rendering="geometricPrecision"/>
<rect x="424.6" y="228.1" width="14.5" height="0.7" fill="#000000" shape-rendering="geometricPrecision"/>
<rect x="424.6" y="252.1" width="10.799999999999955" height="0.7" fill="#000000" shape-rendering="geometricPrecision"/>
<rect x="424.6" y="260.1" width="9.399999999999977" height="0.7" fill="#000000" shape-rendering="geometricPrecision"/>
<rect x="497.3" y="155.1" width="18.099999999999966" height="0.7" fill="#000000" shape-rendering="geometricPrecision"/>
<rect x="506.7" y="171.1" width="8.699999999999989" height="0.7" fill="#000000" shape-rendering="geometricPrecision"/>
<text x="561" y="390.4" font-size="9.5" fill="#000000" stroke="#000000" stroke-width="0.15">U5</text>
<text x="561" y="497.8" font-size="6.5" fill="#000000" stroke="#000000" stroke-width="0.28">L298</text>
<text x="561" y="506.8" font-size="6.5" fill="#7e7e7e" stroke="#7e7e7e" stroke-width="0.28">&lt;TEXT&gt;</text>
<text x="467" y="412.9" font-size="6.5" fill="#000000" stroke="#000000" stroke-width="0.28">IN1</text>
<text x="455" y="409" font-size="6.5" fill="#000000" stroke="#000000" stroke-width="0.28" text-anchor="end">5</text>
<text x="467" y="420.9" font-size="6.5" fill="#000000" stroke="#000000" stroke-width="0.28">IN2</text>
<text x="455" y="417" font-size="6.5" fill="#000000" stroke="#000000" stroke-width="0.28" text-anchor="end">7</text>
<text x="467" y="428.9" font-size="6.5" fill="#000000" stroke="#000000" stroke-width="0.28">IN3</text>
<text x="455" y="425" font-size="6.5" fill="#000000" stroke="#000000" stroke-width="0.28" text-anchor="end">10</text>
<text x="467" y="436.9" font-size="6.5" fill="#000000" stroke="#000000" stroke-width="0.28">IN4</text>
<text x="455" y="433" font-size="6.5" fill="#000000" stroke="#000000" stroke-width="0.28" text-anchor="end">12</text>
<text x="467" y="444.9" font-size="6.5" fill="#000000" stroke="#000000" stroke-width="0.28">ENA</text>
<text x="455" y="441" font-size="6.5" fill="#000000" stroke="#000000" stroke-width="0.28" text-anchor="end">6</text>
<text x="467" y="452.9" font-size="6.5" fill="#000000" stroke="#000000" stroke-width="0.28">ENB</text>
<text x="455" y="449" font-size="6.5" fill="#000000" stroke="#000000" stroke-width="0.28" text-anchor="end">11</text>
<text x="467" y="469.9" font-size="6.5" fill="#000000" stroke="#000000" stroke-width="0.28">SENSA</text>
<text x="455" y="466" font-size="6.5" fill="#000000" stroke="#000000" stroke-width="0.28" text-anchor="end">1</text>
<text x="467" y="477.9" font-size="6.5" fill="#000000" stroke="#000000" stroke-width="0.28">SENSB</text>
<text x="455" y="474" font-size="6.5" fill="#000000" stroke="#000000" stroke-width="0.28" text-anchor="end">15</text>
<text x="555" y="420.9" font-size="6.5" fill="#000000" stroke="#000000" stroke-width="0.28" text-anchor="end">OUT1</text>
<text x="567.6" y="417" font-size="6.5" fill="#000000" stroke="#000000" stroke-width="0.28">2</text>
<text x="555" y="436.9" font-size="6.5" fill="#000000" stroke="#000000" stroke-width="0.28" text-anchor="end">OUT2</text>
<text x="567.6" y="433" font-size="6.5" fill="#000000" stroke="#000000" stroke-width="0.28">3</text>
<text x="555" y="452.9" font-size="6.5" fill="#000000" stroke="#000000" stroke-width="0.28" text-anchor="end">OUT3</text>
<text x="567.6" y="449" font-size="6.5" fill="#000000" stroke="#000000" stroke-width="0.28">13</text>
<text x="555" y="469.9" font-size="6.5" fill="#000000" stroke="#000000" stroke-width="0.28" text-anchor="end">OUT4</text>
<text x="567.6" y="466" font-size="6.5" fill="#000000" stroke="#000000" stroke-width="0.28">14</text>
<text x="494.6" y="412.9" font-size="6.5" fill="#000000" stroke="#000000" stroke-width="0.28" text-anchor="middle">VCC</text>
<text x="527.6" y="412.9" font-size="6.5" fill="#000000" stroke="#000000" stroke-width="0.28" text-anchor="middle">VS</text>
<text x="511.6" y="477.9" font-size="6.5" fill="#000000" stroke="#000000" stroke-width="0.28" text-anchor="middle">GND</text>
<text x="496.6" y="392.9" font-size="6.5" fill="#000000" stroke="#000000" stroke-width="0.28">9</text>
<text x="530" y="392.9" font-size="6.5" fill="#000000" stroke="#000000" stroke-width="0.28">4</text>
<text x="514" y="497.6" font-size="6.5" fill="#000000" stroke="#000000" stroke-width="0.28">8</text>
<text x="607" y="38.6" font-size="9.5" fill="#000000" stroke="#000000" stroke-width="0.15">C2</text>
<text x="607" y="65.7" font-size="6.5" fill="#000000" stroke="#000000" stroke-width="0.28">33p</text>
<text x="607" y="73.6" font-size="6.5" fill="#7e7e7e" stroke="#7e7e7e" stroke-width="0.28">&lt;TEXT&gt;</text>
<text x="591.1" y="75.8" font-size="9.5" fill="#000000" stroke="#000000" stroke-width="0.15">X1</text>
<text x="592" y="84.7" font-size="6.5" fill="#000000" stroke="#000000" stroke-width="0.28">12M</text>
<text x="592" y="92.8" font-size="6.5" fill="#7e7e7e" stroke="#7e7e7e" stroke-width="0.28">&lt;TEXT&gt;</text>
<text x="606.8" y="87.6" font-size="9.5" fill="#000000" stroke="#000000" stroke-width="0.15">C1</text>
<text x="607" y="114.5" font-size="6.5" fill="#000000" stroke="#000000" stroke-width="0.28">33p</text>
<text x="607" y="122.6" font-size="6.5" fill="#7e7e7e" stroke="#7e7e7e" stroke-width="0.28">&lt;TEXT&gt;</text>
<text x="593.9" y="152.5" font-size="9.5" fill="#000000" stroke="#000000" stroke-width="0.15">C3</text>
<text x="593.9" y="124.5" font-size="9.5" fill="#000000" stroke="#000000" stroke-width="0.15">R1</text>
<text x="594.3" y="141.8" font-size="6.5" fill="#000000" stroke="#000000" stroke-width="0.28">10k</text>
<text x="594.3" y="149.8" font-size="6.5" fill="#7e7e7e" stroke="#7e7e7e" stroke-width="0.28">&lt;TEXT&gt;</text>
<text x="594.3" y="178.6" font-size="6.5" fill="#000000" stroke="#000000" stroke-width="0.28">10u</text>
<text x="594.3" y="186.6" font-size="6.5" fill="#7e7e7e" stroke="#7e7e7e" stroke-width="0.28">&lt;TEXT&gt;</text>
<text x="438" y="309.6" font-size="9.5" fill="#000000" stroke="#000000" stroke-width="0.15">C4</text>
<text x="438" y="344.6" font-size="6.5" fill="#7e7e7e" stroke="#7e7e7e" stroke-width="0.28">&lt;TEXT&gt;</text>
<text x="438" y="341.7" font-size="9.5" fill="#000000" stroke="#000000" stroke-width="0.15">C5</text>
<text x="438.2" y="368.9" font-size="6.5" fill="#000000" stroke="#000000" stroke-width="0.28">10µF</text>
<text x="438" y="376.4" font-size="6.5" fill="#7e7e7e" stroke="#7e7e7e" stroke-width="0.28">&lt;TEXT&gt;</text>
<text x="548.8" y="305.6" font-size="9.5" fill="#000000" stroke="#000000" stroke-width="0.15">C6</text>
<text x="548.8" y="314.7" font-size="6.5" fill="#000000" stroke="#000000" stroke-width="0.28">470µF</text>
<text x="549" y="322.6" font-size="6.5" fill="#7e7e7e" stroke="#7e7e7e" stroke-width="0.28">&lt;TEXT&gt;</text>
<text x="596.7" y="305.6" font-size="9.5" fill="#000000" stroke="#000000" stroke-width="0.15">C7</text>
<text x="597" y="322.6" font-size="6.5" fill="#7e7e7e" stroke="#7e7e7e" stroke-width="0.28">&lt;TEXT&gt;</text>
<text x="413.8" y="507.6" font-size="9.5" fill="#000000" stroke="#000000" stroke-width="0.15">R3</text>
<text x="413.8" y="516.7" font-size="6.5" fill="#000000" stroke="#000000" stroke-width="0.28">0.5Ω</text>
<text x="414" y="525.5" font-size="6.5" fill="#7e7e7e" stroke="#7e7e7e" stroke-width="0.28">&lt;TEXT&gt;</text>
<text x="446.8" y="507.6" font-size="9.5" fill="#000000" stroke="#000000" stroke-width="0.15">R2</text>
<text x="446.8" y="516.7" font-size="6.5" fill="#000000" stroke="#000000" stroke-width="0.28">0.5Ω</text>
<text x="447" y="525.5" font-size="6.5" fill="#7e7e7e" stroke="#7e7e7e" stroke-width="0.28">&lt;TEXT&gt;</text>
<text x="487" y="282.8" font-size="6.5" fill="#000000" stroke="#000000" stroke-width="0.28">+5V</text>
<text x="609" y="242.9" font-size="6.5" fill="#000000" stroke="#000000" stroke-width="0.28">+5V</text>
</g>
<g font-family="'Liberation Sans', 'Noto Sans CJK SC', sans-serif" font-weight="400" shape-rendering="geometricPrecision">
<text x="44.6" y="275.3" font-size="15" fill="#800a0a">红外距离检测调节</text>
<text x="734.6" y="423.3" font-size="15" fill="#800a0a">关水龙头</text>
<text x="715.3" y="497.3" font-size="14.92" fill="#800a0a">开水龙头，转速越快，表示水流越大</text>
</g>
<rect x="567" y="300" width="1" height="31" fill="#0a4a0a"/>
<rect x="0" y="5" width="746" height="1" fill="#0000c8"/>
<rect x="745" y="5" width="1" height="568" fill="#0000c8"/>
<rect x="0" y="572" width="746" height="1" fill="#0000c8"/>
<path fill="#0000c8" d="M336 288h1v1h-1zM337 287h1v1h-1zM337 288h1v1h-1zM337 289h1v1h-1zM338 286h1v1h-1zM338 288h1v1h-1zM338 290h1v1h-1zM339 285h1v1h-1zM339 288h1v1h-1zM339 291h1v1h-1zM340 284h1v1h-1zM340 285h1v1h-1zM340 286h1v1h-1zM340 287h1v1h-1zM340 288h1v1h-1zM340 289h1v1h-1zM340 290h1v1h-1zM340 291h1v1h-1zM340 292h1v1h-1zM341 285h1v1h-1zM341 288h1v1h-1zM341 291h1v1h-1zM342 286h1v1h-1zM342 288h1v1h-1zM342 290h1v1h-1zM343 287h1v1h-1zM343 288h1v1h-1zM343 289h1v1h-1zM344 288h1v1h-1zM345 288h1v1h-1z"/>
</svg>
</body></html>
